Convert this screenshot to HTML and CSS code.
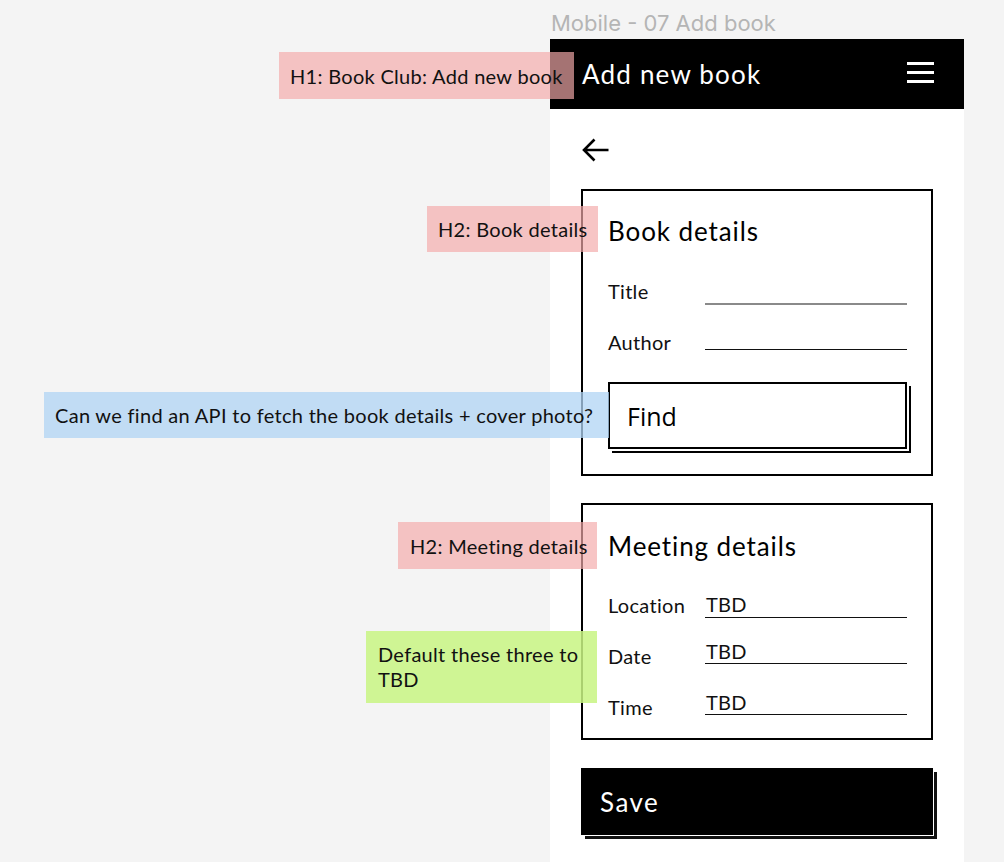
FILE: index.html
```html
<!DOCTYPE html>
<html>
<head>
<meta charset="utf-8">
<link rel="stylesheet" href="styles.css">
</head>
<body>
<div class="canvas">
  <div class="frame-label">Mobile - 07 Add book</div>
  <div class="frame">
    <header class="topbar">
      <h1 class="topbar-title">Add new book</h1>
      <div class="hamburger"><span></span><span></span><span></span></div>
    </header>
    <main class="content">
      <div class="back-row">
        <svg class="back" width="28" height="26" viewBox="0 0 28 26"><path d="M27.5 13H3 M13.5 2.5 3 13 13.5 23.5" fill="none" stroke="#000" stroke-width="2.6"/></svg>
      </div>
      <section class="card card-book">
        <h2 class="card-title">Book details</h2>
        <div class="field"><span class="field-label">Title</span><span class="field-line"></span></div>
        <div class="field"><span class="field-label">Author</span><span class="field-line"></span></div>
        <button class="find-btn">Find</button>
      </section>
      <section class="card card-meeting">
        <h2 class="card-title">Meeting details</h2>
        <div class="field"><span class="field-label">Location</span><span class="field-line">TBD</span></div>
        <div class="field"><span class="field-label">Date</span><span class="field-line">TBD</span></div>
        <div class="field"><span class="field-label">Time</span><span class="field-line">TBD</span></div>
      </section>
      <button class="save-btn">Save</button>
    </main>
  </div>
  <div class="note pink note-h1">H1: Book Club: Add new book</div>
  <div class="note pink note-h2a">H2: Book details</div>
  <div class="note blue note-api">Can we find an API to fetch the book details + cover photo?</div>
  <div class="note pink note-h2b">H2: Meeting details</div>
  <div class="note green note-tbd">Default these three to TBD</div>
</div>
</body>
</html>
```
FILE: styles.css
```css
* { box-sizing: border-box; }
html, body { margin: 0; padding: 0; }
body {
  background: #f4f4f4;
  font-family: "Lato", "Noto Sans", sans-serif;
  color: #111;
  width: 1004px;
  height: 862px;
  overflow: hidden;
}
.canvas { position: relative; width: 1004px; height: 862px; }
.frame-label {
  position: absolute;
  left: 551px; top: 10px;
  font-family: "Inter", sans-serif;
  font-size: 22px;
  line-height: 26px;
  color: #b5b5b5;
}
.frame {
  position: absolute;
  left: 550px; top: 39px;
  width: 414px; height: 823px;
  background: #fff;
}
.topbar {
  height: 70px;
  background: #000;
  display: flex;
  align-items: center;
  justify-content: space-between;
  padding: 0 30px 0 32px;
}
.topbar-title {
  margin: 0;
  color: #fff;
  font-weight: 400;
  font-size: 26px;
  line-height: 32px;
  letter-spacing: 1.2px;
}
.hamburger {
  width: 27px;
  display: flex;
  flex-direction: column;
  gap: 6px;
  margin-top: -3px;
}
.hamburger span { height: 3px; background: #fff; display: block; }
.content { padding: 28px 31px 0; display: flex; flex-direction: column; }
.back-row { height: 26px; }
.back { display: block; }
.card {
  border: 2px solid #000;
  padding: 24px 24px 0 25px;
  display: flex;
  flex-direction: column;
}
.card-book { margin-top: 26px; padding-bottom: 25px; }
.card-meeting { margin-top: 27px; padding-top: 25px; padding-bottom: 19px; }
.card-title {
  margin: 0 0 32px;
  font-weight: 400;
  font-size: 26px;
  line-height: 32px;
  letter-spacing: 0.9px;
  color: #000;
}
.card-meeting .card-title { margin-bottom: 31px; }
.field {
  display: flex;
  align-items: flex-start;
  height: 24px;
  margin-bottom: 27px;
}
.field:last-child { margin-bottom: 0; }
.field-label {
  width: 97px;
  flex: none;
  font-size: 20px;
  line-height: 24px;
  letter-spacing: 0.3px;
}
.field-line {
  flex: 1;
  height: 20px;
  display: flex;
  align-items: flex-end;
  padding: 0 0 2px 1px;
  border-bottom: 1px solid #111;
  font-size: 20px;
  line-height: 20px;
  letter-spacing: 0.3px;
}
.card-title + .field .field-line { height: 25px; padding-bottom: 3px; }
.card-book .card-title + .field .field-line { border-bottom: 2px solid #8a8a8a; height: 26px; }
.card-book .field:nth-of-type(2) { margin-bottom: 28px; }
.find-btn {
  display: block;
  width: 299px;
  height: 67px;
  border: 2px solid #000;
  background: #fff;
  box-shadow: 2px 2px 0 #fff, 4px 4px 0 #000;
  text-align: left;
  padding: 0 0 0 17px;
  font-family: "Open Sans", "Noto Sans", sans-serif;
  font-size: 25px;
  color: #000;
}
.save-btn {
  display: block;
  margin-top: 28px;
  width: 352px;
  height: 67px;
  border: none;
  background: #000;
  box-shadow: 1px 1px 0 #fff, 4px 4px 0 #111;
  text-align: left;
  padding: 0 0 0 19px;
  font-family: "Lato", sans-serif;
  font-size: 26px;
  color: #fff;
  letter-spacing: 1.5px;
}
.note {
  position: absolute;
  font-size: 20px;
  line-height: 24px;
  color: #111;
  display: flex;
  align-items: center;
  letter-spacing: 0.3px;
}
.pink { background: rgba(243, 169, 169, 0.68); }
.blue { background: rgba(176, 212, 244, 0.75); }
.green { background: rgba(200, 244, 130, 0.85); }
.note-h1 { left: 279px; top: 52px; width: 295px; height: 47px; padding-left: 11px; }
.note-h2a { left: 427px; top: 206px; width: 171px; height: 46px; padding-left: 11px; }
.note-api { left: 44px; top: 392px; width: 565px; height: 46px; padding-left: 11px; }
.note-h2b { left: 398px; top: 522px; width: 199px; height: 47px; padding-left: 12px; }
.note-tbd { left: 366px; top: 631px; width: 231px; height: 72px; padding: 0 12px; line-height: 25px; }
```
